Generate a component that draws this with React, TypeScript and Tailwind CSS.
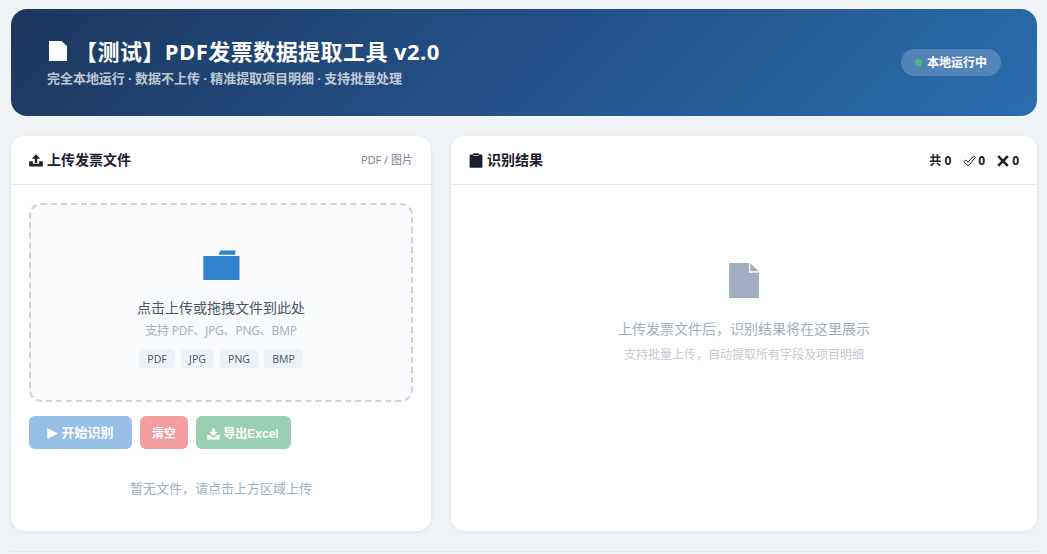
const formats = [
  { name: 'PDF', width: 'w-[36px]' },
  { name: 'JPG', width: 'w-[33px]' },
  { name: 'PNG', width: 'w-[38px]' },
  { name: 'BMP', width: 'w-[39px]' },
];

function UploadIcon() {
  return (
    <svg className="w-[14px] h-[13px] shrink-0" viewBox="0 0 14 13" fill="currentColor">
      <path d="M7 0.2 11.2 4.8H8.2V9H5.8V4.8H2.8Z" />
      <path d="M0.2 7.2H3.8V9.8H10.2V7.2H13.8V12.4H0.2Z" />
    </svg>
  );
}

function DownloadIcon() {
  return (
    <svg className="w-[13px] h-[12px] shrink-0" viewBox="0 0 13 12" fill="currentColor">
      <path d="M5 0.5H8V3.7H10.8L6.5 8 2.2 3.7H5Z" />
      <path d="M0.3 7H3L5.4 9.2H7.6L10 7H12.7V11.5H0.3Z" />
    </svg>
  );
}

function ClipboardIcon() {
  return (
    <svg className="w-[14px] h-[15px] shrink-0" viewBox="0 0 14 15">
      <path d="M1.4 1.6H4L4.7 0.2H9.3L10 1.6H12.6Q13.4 1.6 13.4 2.4V14Q13.4 14.8 12.6 14.8H1.4Q0.6 14.8 0.6 14V2.4Q0.6 1.6 1.4 1.6Z" fill="#1a202c" />
      <path d="M4.5 2.5H9.5" stroke="#fff" strokeWidth="0.7" />
    </svg>
  );
}

function CardHeader({ icon, title, children }: { icon: React.ReactNode; title: string; children: React.ReactNode }) {
  return (
    <div className="h-[49px] px-[18px] flex items-center justify-between border-b border-[#e2e8f0]">
      <h2 className="flex items-center gap-[4px] text-[14px] leading-5 font-bold text-[#1a202c]">
        {icon}
        {title}
      </h2>
      {children}
    </div>
  );
}

export default function App() {
  return (
    <div className="h-[554px] overflow-hidden bg-[#eff3f6] pl-[11px] pr-[10px] pt-[9px] font-['Open_Sans','Noto_Sans_CJK_SC',sans-serif]">
      {/* Banner */}
      <header className="h-[107px] rounded-[16px] bg-[linear-gradient(135deg,#1c375e_0%,#2b6cb0_100%)] pl-9 pr-9 flex items-center justify-between text-white">
        <div className="flex flex-col">
          <h1 className="flex items-center text-[22px] leading-[30px] font-bold tracking-[0.45px] whitespace-nowrap">
            <svg className="w-[18px] h-5 ml-[2px] mr-[8px]" viewBox="0 0 18 20" fill="currentColor">
              <path d="M0 0H12.5L18 5V20H0Z" />
            </svg>
            【测试】PDF发票数据提取工具 v2.0
          </h1>
          <p className="pt-[2px] text-[13px] leading-[21px] font-bold tracking-[-0.04px] opacity-70">
            完全本地运行 · 数据不上传 · 精准提取项目明细 · 支持批量处理
          </p>
        </div>
        <div className="w-[100px] h-[27px] rounded-full bg-white/20 flex items-center justify-center gap-[5px] text-[12px] font-bold">
          <span className="w-[7px] h-[7px] rounded-full bg-[#48bb78]" />
          <span className="pt-px">本地运行中</span>
        </div>
      </header>

      <main className="mt-5 flex gap-5 h-[395px]">
        {/* Upload */}
        <section className="w-[420px] bg-white rounded-[14px] shadow-[0_1px_4px_rgba(0,0,0,0.07)]">
          <CardHeader icon={<UploadIcon />} title="上传发票文件">
            <span className="text-[11px] text-[#718096]">PDF / 图片</span>
          </CardHeader>
          <div className="px-[18px] pt-[18px]">
            <div className="h-[199px] rounded-[12px] border-2 border-dashed border-[#cdd3dc] bg-[#f8fafc] flex flex-col items-center pt-[45px]">
              <svg className="w-[37px] h-[30px]" viewBox="0 0 37 30" fill="#3182ce">
                <path d="M0.3 6H36.5V30H0.3Z" />
                <path d="M17.3 0.5H32.3V4.7H15.7Z" />
              </svg>
              <p className="mt-[17px] text-[14px] leading-[22px] text-[#4a5568]">点击上传或拖拽文件到此处</p>
              <p className="mt-[1px] text-[12px] leading-[22px] tracking-[-0.2px] text-[#a0aec0]">支持 PDF、JPG、PNG、BMP</p>
              <div className="mt-[7px] flex gap-[6px]">
                {formats.map((f) => (
                  <span key={f.name} className={`${f.width} h-[19px] rounded-[4px] bg-[#edf2f7] text-center text-[10.5px] leading-[20px] text-[#4a5568]`}>
                    {f.name}
                  </span>
                ))}
              </div>
            </div>

            <div className="mt-[14px] flex gap-2 h-[33px] text-white font-bold font-['Liberation_Sans','Noto_Sans_CJK_SC',sans-serif]">
              <button className="w-[103px] rounded-[6px] bg-[#98bfe6] flex items-center justify-center gap-[3px] pt-px text-[13px]">
                <svg className="w-[11px] h-[11px]" viewBox="0 0 11 11" fill="currentColor">
                  <path d="M0.3 0 11 5.5 0.3 11Z" />
                </svg>
                开始识别
              </button>
              <button className="w-[48px] rounded-[6px] bg-[#f29e9e] pt-[2px] text-[12px]">清空</button>
              <button className="w-[95px] rounded-[6px] bg-[#9bcfb3] flex items-center justify-center gap-[3px] pt-[2px] pr-px text-[12px]">
                <DownloadIcon />
                导出Excel
              </button>
            </div>

            <p className="mt-[29px] text-center text-[13px] leading-5 text-[#a0aec0]">暂无文件，请点击上方区域上传</p>
          </div>
        </section>

        {/* Results */}
        <section className="flex-1 bg-white rounded-[14px] shadow-[0_1px_4px_rgba(0,0,0,0.07)]">
          <CardHeader icon={<ClipboardIcon />} title="识别结果">
            <div className="flex items-center pt-px text-[12px] leading-5 font-bold text-[#1a202c]">
              <span>共 0</span>
              <span className="ml-[12px] flex items-center gap-[2px]">
                <svg className="w-[13px] h-[12px]" viewBox="0 0 13 12" fill="none" stroke="currentColor" strokeWidth="1">
                  <path d="M0.8 6.6 2.8 5 5 7.3 10.6 0.9 12.4 2.4 5.2 11Z" />
                </svg>
                0
              </span>
              <span className="ml-[12px] flex items-center gap-[3px]">
                <svg className="w-[12px] h-[12px]" viewBox="0 0 12 12" fill="none" stroke="currentColor" strokeWidth="2.6">
                  <path d="M1.2 1.2 10.8 10.8M10.8 1.2 1.2 10.8" />
                </svg>
                0
              </span>
            </div>
          </CardHeader>
          <div className="pt-[78px] flex flex-col items-center">
            <svg className="w-[30px] h-[35px]" viewBox="0 0 30 35" fill="#a0aec0">
              <path d="M0 0H20V9.7H30V35H0Z" />
              <path d="M21.3 0.3 29.7 8.3H21.3Z" />
            </svg>
            <p className="mt-5 text-[14px] leading-[22px] text-[#a0aec0]">上传发票文件后，识别结果将在这里展示</p>
            <p className="mt-[4px] text-[12px] leading-[22px] text-[#c3cad4]">支持批量上传，自动提取所有字段及项目明细</p>
          </div>
        </section>
      </main>

      <footer className="mt-5 border-t border-[#e2e8f0]" />
    </div>
  );
}
